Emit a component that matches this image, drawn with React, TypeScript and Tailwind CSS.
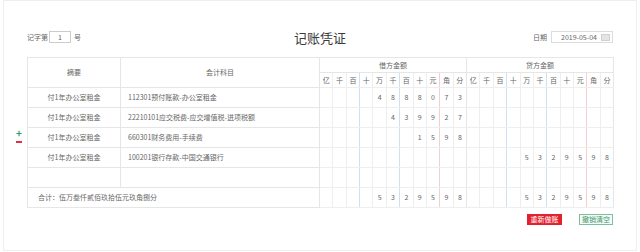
import React from "react";

const units = ["亿", "千", "百", "十", "万", "千", "百", "十", "元", "角", "分"];

const rows = [
  { summary: "付1年办公室租金", account: "112301预付账款-办公室租金", debit: "4888073", credit: "" },
  { summary: "付1年办公室租金", account: "22210101应交税费-应交增值税-进项税额", debit: "439927", credit: "" },
  { summary: "付1年办公室租金", account: "660301财务费用-手续费", debit: "1598", credit: "" },
  { summary: "付1年办公室租金", account: "100201银行存款-中国交通银行", debit: "", credit: "5329598" },
  { summary: "", account: "", debit: "", credit: "" },
];

const lineClass = (i: number) => {
  if (i === 2 || i === 5) return "border-r-[#cfe0f3]";
  if (i === 8) return "border-r-[#f2cfd2]";
  if (i === 10) return "border-r-[#e6e6e6]";
  return "border-r-[#eeeeee]";
};

const splitDigits = (value: string) => {
  const cells: string[] = Array(11).fill("");
  const chars = value.split("");
  chars.forEach((c, i) => {
    cells[11 - chars.length + i] = c;
  });
  return cells;
};

function AmountCells({ value }: { value: string }) {
  return (
    <>
      {splitDigits(value).map((d, i) => (
        <td key={i} className={`border-y border-y-[#eeeeee] border-r ${lineClass(i)} text-center text-[7px] text-[#666]`}>
          {d}
        </td>
      ))}
    </>
  );
}

function App() {
  return (
    <div
      className="w-[640px] h-[252px] bg-white px-[3px] text-[#666]"
      style={{ fontFamily: '"Noto Sans CJK SC", "Noto Sans", sans-serif' }}
    >
      <div className="h-[251px] border border-[#eeeeee] px-[23px] pt-[29px] relative">
        <div className="flex items-center h-[14px]">
          <div className="flex-1 flex items-center text-[7px] text-[#666]">
            <span>记字第</span>
            <div className="w-[22px] h-[12px] border border-[#cccccc] ml-[1px] flex items-center justify-center">1</div>
            <span className="ml-[3px]">号</span>
          </div>
          <div className="text-[13px] leading-none text-[#3a3a3a]">记账凭证</div>
          <div className="flex-1 flex items-center justify-end text-[7px] text-[#666]">
            <span className="mr-[4px]">日期</span>
            <div className="w-[62px] h-[12px] border border-[#dddddd] flex items-center pl-[9px] pr-[2px]">
              <span className="flex-1">2019-05-04</span>
              <span className="w-[9px] h-[7px] bg-[#e4e4e4] border border-[#d0d0d0]"></span>
            </div>
          </div>
        </div>

        <div className="relative mt-[13px]">
          <div className="absolute left-[-11px] top-[71px] flex flex-col items-center leading-none">
            <span className="text-[10px] font-bold text-[#2e9e6a]">+</span>
            <span className="w-[6px] h-[1.5px] bg-[#d9343f] mt-[3px]"></span>
          </div>

          <table className="table-fixed border-collapse w-[586px] border border-[#e6e6e6]">
            <colgroup>
              <col className="w-[93px]" />
              <col className="w-[199px]" />
              {Array.from({ length: 22 }).map((_, i) => (
                <col key={i} className="w-[13.36px]" />
              ))}
            </colgroup>
            <thead>
              <tr className="h-[15px]">
                <th rowSpan={2} className="border border-[#e6e6e6] text-[7px] font-normal text-[#666]">摘要</th>
                <th rowSpan={2} className="border border-[#e6e6e6] text-[7px] font-normal text-[#666]">会计科目</th>
                <th colSpan={11} className="border border-[#e6e6e6] text-[7px] font-normal text-[#666]">借方金额</th>
                <th colSpan={11} className="border border-[#e6e6e6] text-[7px] font-normal text-[#666]">贷方金额</th>
              </tr>
              <tr className="h-[15px]">
                {[...units, ...units].map((u, i) => (
                  <th key={i} className={`border-y border-y-[#eeeeee] border-r ${lineClass(i % 11)} text-[7px] font-normal text-[#666]`}>
                    {u}
                  </th>
                ))}
              </tr>
            </thead>
            <tbody>
              {rows.map((r, i) => (
                <tr key={i} className="h-[20px]">
                  <td className="border border-[#e6e6e6] text-center text-[7px] text-[#666]">{r.summary}</td>
                  <td className="border border-[#e6e6e6] pl-[7px] text-[7px] text-[#666]">{r.account}</td>
                  <AmountCells value={r.debit} />
                  <AmountCells value={r.credit} />
                </tr>
              ))}
              <tr className="h-[20px]">
                <td colSpan={2} className="border border-[#e6e6e6] pl-[10px] text-[7px] text-[#666]">合计：伍万叁仟贰佰玖拾伍元玖角捌分</td>
                <AmountCells value="5329598" />
                <AmountCells value="5329598" />
              </tr>
            </tbody>
          </table>
        </div>

        <div className="flex justify-end gap-[17px] mt-[6px]">
          <button className="w-[35px] h-[11px] bg-[#e5202e] text-white text-[7px] leading-none flex items-center justify-center">重新做账</button>
          <button className="w-[34px] h-[11px] border border-[#7cc0a0] text-[#3d9a6e] bg-[#f6fbf8] text-[7px] leading-none flex items-center justify-center">撤销清空</button>
        </div>
      </div>
    </div>
  );
}

export default App;
